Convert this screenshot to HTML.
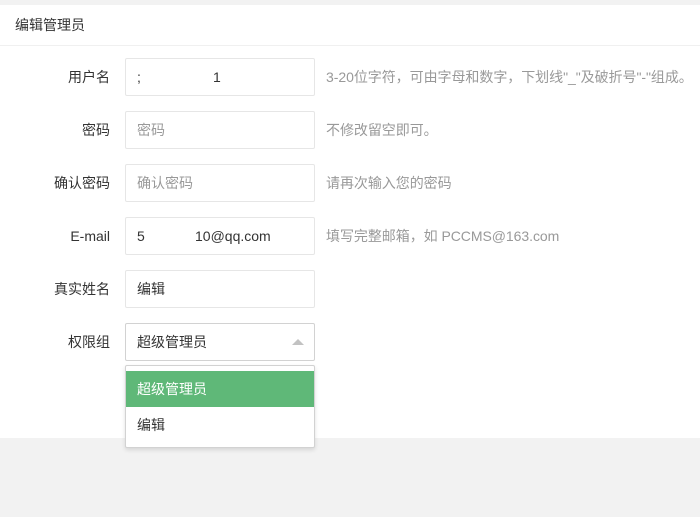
<!DOCTYPE html><html><head><meta charset="utf-8"><style>
*{margin:0;padding:0;box-sizing:border-box}
body{width:700px;height:517px;background:#f2f2f2;font-family:"Liberation Sans","Noto Sans CJK SC",sans-serif;font-size:14px;color:#333;position:relative;overflow:hidden}
.card{position:absolute;left:0;top:5px;width:700px;height:433px;background:#fff}
.hd{height:41px;line-height:41px;padding-left:15px;border-bottom:1px solid #f0f0f0;color:#333}
.lb{position:absolute;width:110px;text-align:right;line-height:38px}
.in{position:absolute;left:125px;width:190px;height:38px;border:1px solid #e6e6e6;border-radius:2px;padding-left:11px;line-height:36px;background:#fff}
.ph{color:#999}
.hint{position:absolute;left:326px;line-height:38px;color:#999;letter-spacing:-0.05px}
.dd{position:absolute;left:125px;top:365px;width:190px;height:83px;border:1px solid #d2d2d2;background:#fff;box-shadow:0 2px 4px rgba(0,0,0,.12);border-radius:2px;padding-top:5px}
.dd div{height:36px;line-height:36px;padding-left:11px}
.tri{position:absolute;right:10px;top:15px;width:0;height:0;border-left:6px solid transparent;border-right:6px solid transparent;border-bottom:6px solid #c2c2c2}
</style></head><body>
<div class="card"><div class="hd">编辑管理员</div></div>
<div class="lb" style="top:58px">用户名</div><div class="in" style="top:58px">;<span style="position:absolute;left:87px">1</span></div><div class="hint" style="top:58px">3-20位字符，可由字母和数字，下划线"_"及破折号"-"组成。</div>
<div class="lb" style="top:111px">密码</div><div class="in ph" style="top:111px">密码</div><div class="hint" style="top:111px">不修改留空即可。</div>
<div class="lb" style="top:164px">确认密码</div><div class="in ph" style="top:164px">确认密码</div><div class="hint" style="top:164px">请再次输入您的密码</div>
<div class="lb" style="top:217px">E-mail</div><div class="in" style="top:217px">5<span style="position:absolute;left:69px">10@qq.com</span></div><div class="hint" style="top:217px">填写完整邮箱，如 PCCMS@163.com</div>
<div class="lb" style="top:270px">真实姓名</div><div class="in" style="top:270px">编辑</div>
<div class="lb" style="top:323px">权限组</div><div class="in" style="top:323px;border-color:#d2d2d2">超级管理员<span class="tri"></span></div>
<div class="dd"><div style="background:#5fb878;color:#fff">超级管理员</div><div>编辑</div></div>
</body></html>
